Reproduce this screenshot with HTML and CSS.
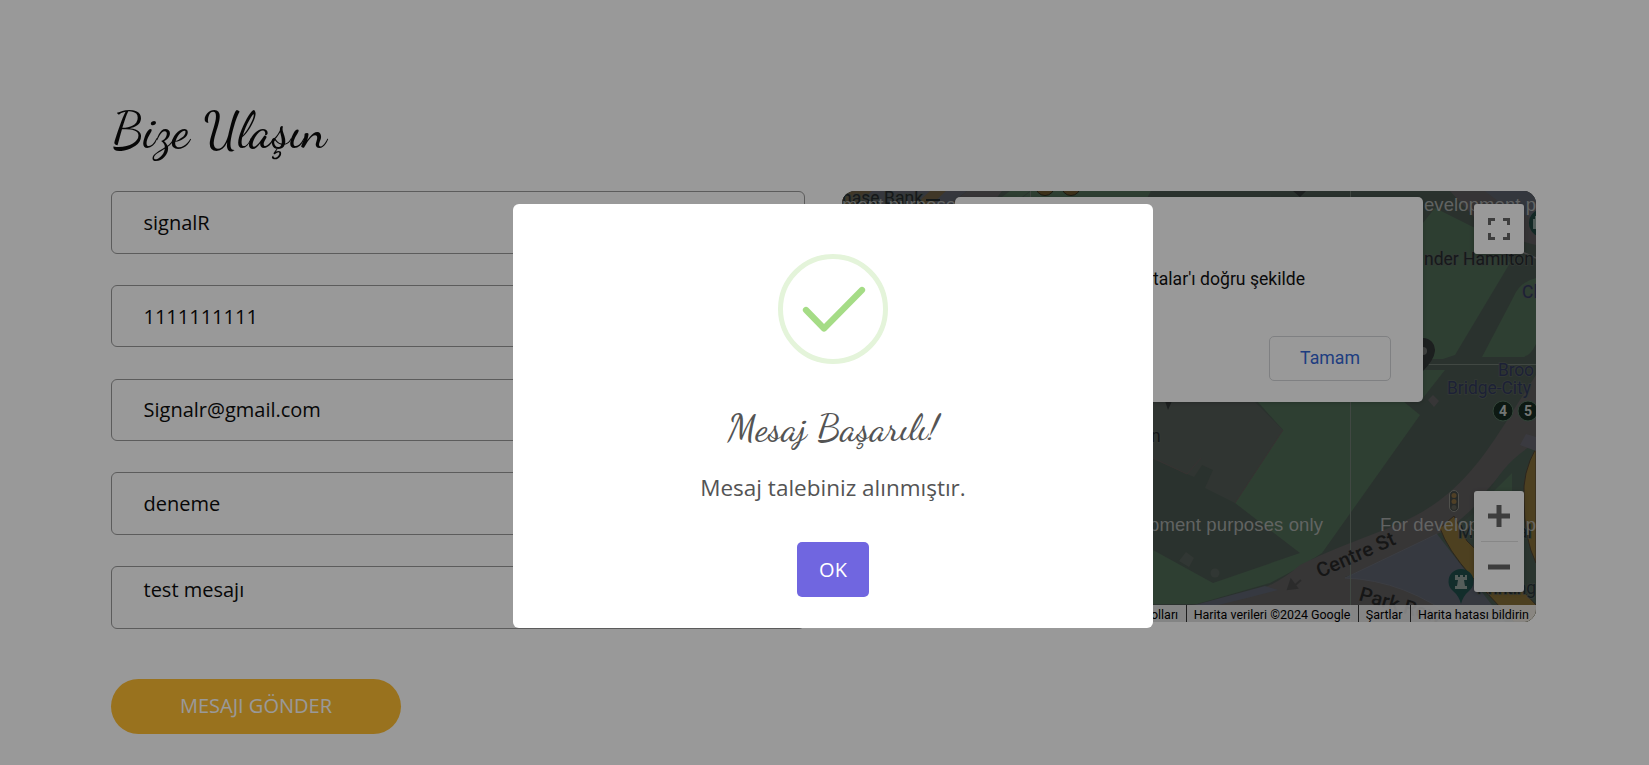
FILE: index.html
```html
<!DOCTYPE html>
<html lang="tr">
<head>
<meta charset="utf-8">
<title>Bize Ulaşın</title>
<link rel="stylesheet" href="styles.css">
</head>
<body>
<main class="contact">
  <h2 class="contact-title"><span class="script">Bize Ulaşın</span></h2>
  <div class="contact-grid">
    <form class="contact-form">
      <div class="field">signalR</div>
      <div class="field">1111111111</div>
      <div class="field field-email">Signalr@gmail.com</div>
      <div class="field">deneme</div>
      <div class="field field-area">test mesajı</div>
      <button class="submit" type="button">MESAJI GÖNDER</button>
    </form>
    <section class="map">
      <svg class="map-canvas" viewBox="842 191 694 431" preserveAspectRatio="none">
        <rect x="842" y="191" width="694" height="431" fill="#47544d"/>
        <!-- top left blocks -->
        <path d="M842 191h125l-16 13H842z" fill="#5a5d67"/>
        <path d="M842 191h30l-15 14h-15zM930 191h16l-14 13h-16z" fill="#6b5c42"/>
        <path d="M967 191h35l-10 13h-41z" fill="#5d5b5d"/>
        <path d="M1010 191h20l-8 6h-20zM1031 191h120l-4 7H1022z" fill="#4d6954"/>
        <!-- park lawns -->
        <path d="M1423 223l12-15 40 20 35 35-55 92-12 4h-20z" fill="#4d6954"/>
        <path d="M1536 278q-16 4-22 18l-32 61h40q8 0 14-13z" fill="#4d6954"/>
        <path d="M1423 370h22l-22 28z" fill="#4d6954"/>
        <path d="M1257 401h146l17 14-98 138-22 14-30 16-73 21h-44v-54l60 33 87-30-65-50 48-73z" fill="#4d6954"/>
        <path d="M1153 401h101l29 29-48 73-30-15 8-18-11-5-8 12-41-18z" fill="#515954"/>
        <path d="M1283 430l-48 73M1153 458l34 16 14-16" stroke="#5b5554" fill="none"/>
        <circle cx="1215" cy="573" r="4.500" fill="#535c57"/>
        <path d="M1186 552l8 6-5 9-10-6z" fill="#535c57"/>
        <!-- streets -->
        <path d="M1450 191h86v54q-35-8-61-27z" fill="#5b595b"/>
        <path d="M1485 191h51v28q-30-10-51-28z" fill="#585d68"/>
        <path d="M1495 240l41 18" stroke="#7c7778" stroke-width="1.500" fill="none"/>
        <path d="M1536 375C1500 430 1480 470 1440 500S1360 535 1300 565C1265 596 1220 603 1180 606V622H1500L1400 580Q1375 577 1345 577C1420 550 1465 525 1487 490C1510 464 1520 455 1536 440z" fill="#5c5a5b"/>
        <path d="M1195 605L1265 586 1278 590Q1240 600 1210 607z" fill="#5a606d"/>
        <path d="M1345 578L1437 534 1475 574 1505 622H1460Q1405 580 1345 578z" fill="#5a606c" stroke="#646770"/>
        <path d="M1437 534Q1475 520 1487 495Q1505 460 1536 443V622H1505Z" fill="#47594f"/>
        <path d="M1494 491l18-18v23z" fill="#4d6954"/>
        <path d="M1440 528l14-12 13 25q26 26 46 39l23 25v17h-22l-42-45q-25-28-32-49z" fill="#806b36" stroke="#493f32"/>
        <path d="M1536 448q-14 25-12 51 0 40 12 64z" fill="#806b36" stroke="#493f32"/>
        <path d="M1520 445l6-11 10 3v14z" fill="#62626b"/>
        <path d="M1428 400l5-5 6 6-5 6z" fill="#5d5b5d"/>
        <path d="M1350.500 191V622M1423 364.500H1536M1030.500 191v8" stroke="#6d7870" fill="none"/>
        <!-- pins -->
        <g fill="#303535"><path d="M1423 338a12 12 0 0 1 12 13q-1 9-12 20zM1293 191h13l-6 6zM1165 401h7l-4 9z"/></g>
        <circle cx="1423" cy="351" r="4" fill="#6a6d6b"/>
        <circle cx="1045" cy="186" r="9.500" fill="#66532c" stroke="#302b20"/><circle cx="1071" cy="186" r="9.500" fill="#66532c" stroke="#302b20"/>
        <g class="line-badges"><circle cx="1503" cy="411" r="10" fill="#172b20" stroke="#54715e"/><circle cx="1528" cy="411" r="10" fill="#172b20" stroke="#54715e"/>
        <text x="1503" y="416" text-anchor="middle">4</text><text x="1528" y="416" text-anchor="middle">5</text></g>
        <circle cx="1543" cy="223" r="14" fill="#1f4540"/><path d="M1533 219h2v-3h1v13h-3z" fill="#859a95"/>
        <rect x="1449.500" y="490.500" width="9" height="21" rx="4.500" fill="#424644" stroke="#85867f"/>
        <circle cx="1454" cy="495.500" r="2.500" fill="#856b40"/><circle cx="1454" cy="501.500" r="2.500" fill="#856b40"/><circle cx="1454" cy="507.500" r="2.500" fill="#5f6055"/>
        <path d="M1461 604q-2-8-8-13a12.500 12.500 0 1 1 16 0q-6 5-8 13z" fill="#1f4b49"/>
        <path d="M1455 575h3v2h2v-2h3v2h2v-2h2v5h-3l1 6h2v3h-12v-3h2l1-6h-3z" fill="#8d9b97"/>
        <!-- labels -->
        <g class="place">
          <text x="842" y="204" textLength="81">hase Bank</text>
          <text x="1424" y="265" textLength="110">nder Hamilton</text>
          <text x="1151" y="442">n</text>
        </g>
        <g class="place place-blue">
          <text x="1522" y="298">Cl</text>
          <text x="1498" y="376" textLength="36">Broo</text>
          <text x="1447" y="394" textLength="84">Bridge-City</text>
        </g>
        <g class="place place-dark"><text x="1458" y="538">M.</text><text x="1518" y="538">al</text><text x="1477" y="594" textLength="59">Printing</text></g>
        <path d="M926 199h14v2h-14z" fill="#22282c"/>
        <g class="street"><text transform="translate(1320 578) rotate(-24)" textLength="84">Centre St</text><text transform="translate(1358 600) rotate(16)">Park Row</text></g>
        <path d="M1301 580l-8 7M1288 589l3-9 6 8z" stroke="#494949" stroke-width="2" fill="#494949"/>
        <g class="watermark">
          <text x="842" y="211" textLength="114">ment purpose</text>
          <text x="1424" y="211" textLength="112">evelopment p</text>
          <text x="1149" y="531" textLength="174">pment purposes only</text>
          <text x="1380" y="531" textLength="156">For development p</text>
        </g>
      </svg>
      <div class="map-dialog">
        <p class="map-dialog-text">talar'ı doğru şekilde</p>
        <button class="map-dialog-ok" type="button">Tamam</button>
      </div>
      <div class="map-control fullscreen">
        <svg width="22" height="22" viewBox="0 0 22 22"><path d="M1.500 7V1.500H7M15 1.500h5.500V7M20.500 15v5.500H15M7 20.500H1.500V15" fill="none" stroke="#666" stroke-width="3"/></svg>
      </div>
      <div class="map-control zoom">
        <svg width="22" height="22" viewBox="0 0 22 22"><path d="M0 11h22M11 0v22" stroke="#666" stroke-width="5"/></svg>
        <span class="zoom-line"></span>
        <svg width="22" height="22" viewBox="0 0 22 22"><path d="M0 11h22" stroke="#666" stroke-width="5"/></svg>
      </div>
      <div class="map-credits"><span>olları</span><span>Harita verileri ©2024 Google</span><span>Şartlar</span><span>Harita hatası bildirin</span></div>
    </section>
  </div>
</main>
<div class="backdrop">
  <div class="alert">
    <svg class="alert-icon" width="110" height="110" viewBox="0 0 110 110"><circle cx="55" cy="55" r="52.500" fill="none" stroke="#e4f4da" stroke-width="5"/><path d="M28 56L46 74.500L84 36" fill="none" stroke="#a5dc86" stroke-width="6.250" stroke-linecap="round" stroke-linejoin="round"/></svg>
    <h2 class="alert-title"><span class="script">Mesaj Başarılı!</span></h2>
    <p class="alert-text">Mesaj talebiniz alınmıştır.</p>
    <button class="alert-ok" type="button">OK</button>
  </div>
</div>
</body>
</html>
```
FILE: styles.css
```css
* { box-sizing: border-box; }
html, body { height: 100%; }
body { margin: 0; overflow: hidden; background: #fff; color: #0c0c0c; font-family: "Open Sans", sans-serif; font-size: 20px; }
button { font: inherit; }
.contact { padding: 97px 112px 0 111px; }
.contact-title { height: 94px; margin: 0; font-size: 50px; line-height: 62px; }
.script { display: inline-block; font-family: "Dancing Script", "Liberation Serif", cursive; font-weight: 500; white-space: nowrap; }
.contact-title .script { margin-left: 1px; letter-spacing: .4px; }
.contact-grid { display: grid; grid-template-columns: 694px 694px; gap: 37px; align-items: start; }
.contact-form { display: flex; flex-direction: column; }
.field { height: 62.500px; margin-bottom: 31.250px; padding: 0 31.500px; border: 1px solid #999; border-radius: 6px; line-height: 61px; }
.field-email { line-height: 60px; }
.field-area { line-height: 27px; padding-top: 9px; }
.submit { align-self: flex-start; width: 290px; height: 55px; margin-top: 19px; padding: 0 0 2px; border: 0; border-radius: 56px; background: #ffbe33; color: #fff; }

.map { position: relative; height: 431px; overflow: hidden; border-radius: 13px; font-family: Roboto, sans-serif; }
.map-canvas { display: block; width: 100%; height: 100%; }
.place { fill: #25292d; font-size: 17.500px; stroke: #566059; stroke-width: 1.500px; paint-order: stroke; }
.place-blue { fill: #30375a; }
.place-dark { fill: #263236; }
.street { fill: #252626; font-size: 20px; font-weight: 500; }
.line-badges text { fill: #c0c5c1; font-size: 14px; font-weight: 700; }
.watermark { fill: #b2b4b3; font-family: "Liberation Sans", sans-serif; font-size: 18.500px; opacity: .85; }
.map-dialog { position: absolute; left: 113px; top: 6px; width: 468px; height: 205px; display: flex; flex-direction: column; align-items: flex-end; padding: 71px 32px 0; border-radius: 5px; background: #fff; box-shadow: 0 1px 4px #0003; }
.map-dialog-text { width: 152px; margin: 0 86px 45px 0; white-space: nowrap; font-size: 17.600px; line-height: 23px; color: #111; }
.map-dialog-ok { width: 122px; height: 45px; padding: 0 0 2px; border: 1px solid #d4d6d9; border-radius: 5px; background: #fff; color: #3367d6; font-size: 17.700px; }
.map-control { position: absolute; right: 12px; width: 50px; display: flex; flex-direction: column; align-items: center; border-radius: 3px; background: #fff; box-shadow: 0 1px 5px -1px #0006; }
.fullscreen { top: 13px; height: 50px; justify-content: center; }
.zoom { top: 300px; height: 101px; justify-content: space-between; padding: 14px 0; }
.zoom-line { width: 37px; height: 1px; background: #e1e1e1; }
.map-credits { position: absolute; right: 0; bottom: 0; height: 17px; display: flex; background: #f5f5f5d8; font-size: 12.450px; line-height: 19px; color: #000; white-space: nowrap; }
.map-credits span { padding: 0 7.800px 0 6.700px; border-left: 1px solid #333; }
.map-credits span:last-child { padding-right: 7px; }

.backdrop { position: fixed; inset: 0; padding-top: 204px; background: rgba(0, 0, 0, .4); }
.alert { width: 640px; height: 424px; margin-left: 513px; padding-top: 50px; display: flex; flex-direction: column; align-items: center; border-radius: 6px; background: #fff; color: #545454; }
.alert-title { margin: 36px 0 0; height: 53px; font-size: 37.500px; line-height: 52px; }
.alert-title .script { letter-spacing: .2px; }
.alert-text { margin: 20px 0 0; font-size: 22.500px; line-height: 30px; }
.alert-ok { width: 72px; height: 55px; margin-top: 39px; padding: 0; border: 0; border-radius: 5px; background: #7066e0; color: #fff; }
```
